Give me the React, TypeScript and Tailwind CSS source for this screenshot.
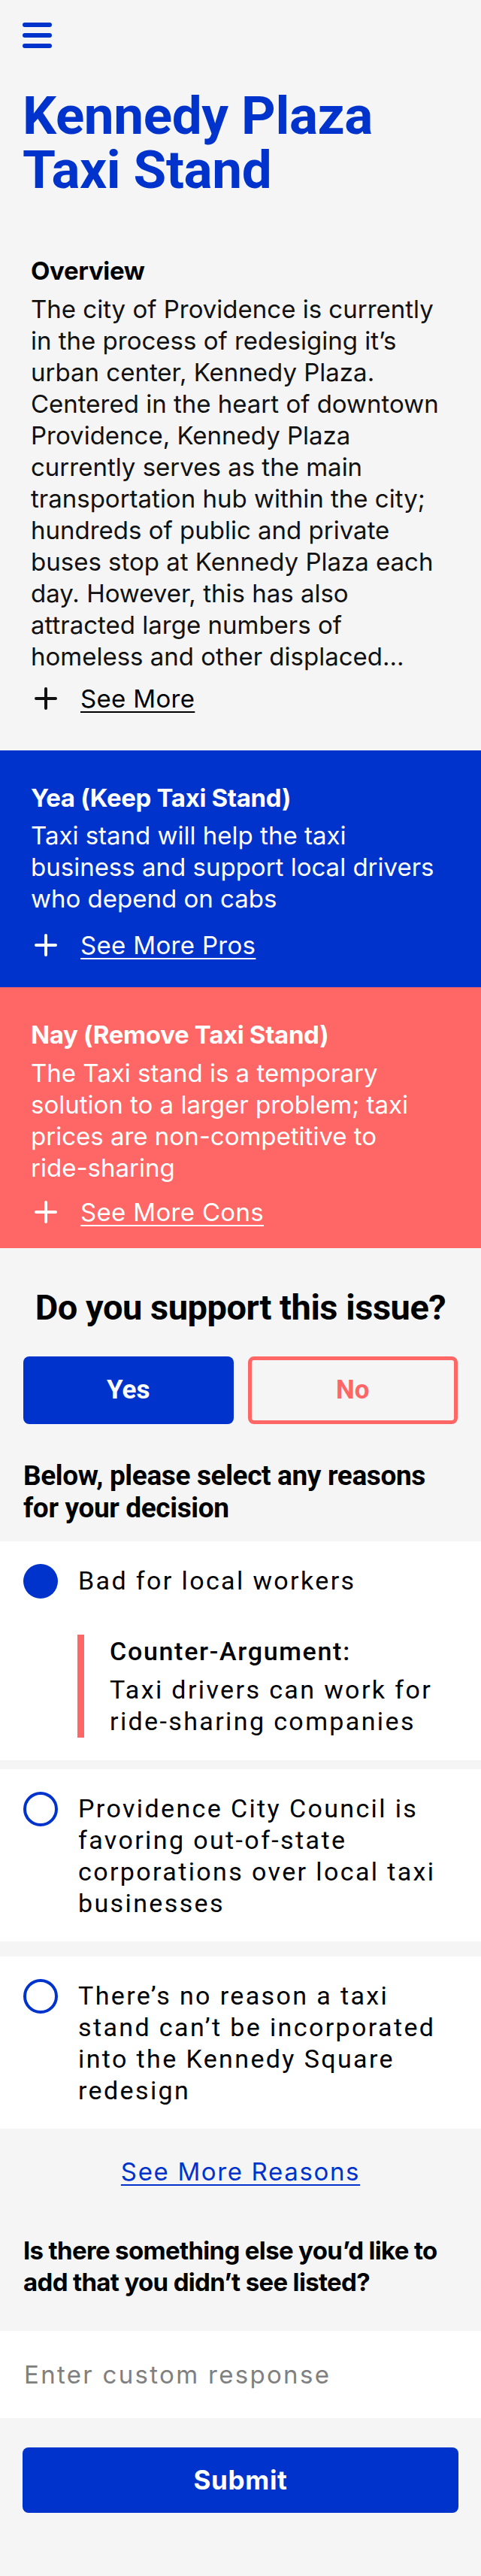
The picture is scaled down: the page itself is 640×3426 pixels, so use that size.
import React, { useState } from 'react';

const Plus: React.FC<{ color: string }> = ({ color }) => (
  <svg width="40" height="40" viewBox="0 0 40 40" fill="none" stroke={color} strokeWidth="4" strokeLinecap="round">
    <line x1="20" y1="7" x2="20" y2="33" />
    <line x1="7" y1="20" x2="33" y2="20" />
  </svg>
);

const SeeMore: React.FC<{ label: string; color: string; className?: string }> = ({ label, color, className }) => (
  <div className={`flex items-center gap-[26px] ${className ?? ''}`}>
    <Plus color={color} />
    <a href="#" className="underline decoration-2 underline-offset-[5px] tracking-[0.01em]">
      {label}
    </a>
  </div>
);

const Radio: React.FC<{ checked: boolean }> = ({ checked }) =>
  checked ? (
    <span className="block w-[46px] h-[46px] shrink-0 rounded-full bg-[#0033cc]" />
  ) : (
    <span className="block w-[46px] h-[46px] shrink-0 rounded-full border-4 border-[#0033cc] bg-white" />
  );

const reasons = [
  {
    label: 'Bad for local workers',
    counter: 'Taxi drivers can work for ride-sharing companies',
  },
  {
    label: 'Providence City Council is favoring out-of-state corporations over local taxi businesses',
  },
  {
    label: 'There’s no reason a taxi stand can’t be incorporated into the Kennedy Square redesign',
  },
];

const App: React.FC = () => {
  const [support, setSupport] = useState<'yes' | 'no'>('yes');
  const [picked, setPicked] = useState(0);

  return (
    <div className="w-[640px] min-h-screen bg-[#f5f5f5] text-black font-['Inter',sans-serif]">
      {/* Header */}
      <div className="px-[30px] pt-[30px]">
        <button className="flex flex-col gap-[8px]" aria-label="Menu">
          <span className="block w-[39px] h-[6px] rounded-full bg-[#0033cc]" />
          <span className="block w-[39px] h-[6px] rounded-full bg-[#0033cc]" />
          <span className="block w-[39px] h-[6px] rounded-full bg-[#0033cc]" />
        </button>
        <h1 className="mt-[54px] font-['Roboto',sans-serif] font-bold text-[71px] leading-[72px] tracking-[-0.005em] text-[#0033cc]">
          Kennedy Plaza
          <br />
          Taxi Stand
        </h1>
      </div>

      {/* Overview */}
      <section className="pl-[41px] pr-[30px] pt-[77px] pb-[48px] text-[33px] leading-[42px]">
        <h2 className="font-bold tracking-[-0.01em]">Overview</h2>
        <p className="mt-[9px] text-[#111]">
          The city of Providence is currently in the process of redesiging it’s urban center, Kennedy Plaza.
          Centered in the heart of downtown Providence, Kennedy Plaza currently serves as the main transportation
          hub within the city; hundreds of public and private buses stop at Kennedy Plaza each day. However, this
          has also attracted large numbers of homeless and other displaced...
        </p>
        <SeeMore label="See More" color="#111" className="mt-[14px]" />
      </section>

      {/* Pros */}
      <section className="bg-[#0033cc] text-white pl-[41px] pr-[44px] pt-[42px] pb-[35px] text-[33px] leading-[42px]">
        <h3 className="font-bold tracking-[-0.01em]">Yea (Keep Taxi Stand)</h3>
        <p className="mt-[8px]">Taxi stand will help the taxi business and support local drivers who depend on cabs</p>
        <SeeMore label="See More Pros" color="#fff" className="mt-[20px]" />
      </section>

      {/* Cons */}
      <section className="bg-[#ff6666] text-white pl-[41px] pr-[44px] pt-[42px] pb-[27px] text-[33px] leading-[42px]">
        <h3 className="font-bold tracking-[-0.01em]">Nay (Remove Taxi Stand)</h3>
        <p className="mt-[9px]">
          The Taxi stand is a temporary solution to a larger problem; taxi prices are non-competitive to{' '}
          <span className="whitespace-nowrap">ride-sharing</span>
        </p>
        <SeeMore label="See More Cons" color="#fff" className="mt-[17px]" />
      </section>

      {/* Vote */}
      <section className="px-[31px] pt-[54px] pb-[23px] font-['Roboto',sans-serif]">
        <h2 className="text-center font-bold text-[47px] leading-[50px] tracking-[-0.01em]">Do you support this issue?</h2>
        <div className="mt-[40px] grid grid-cols-2 gap-[19px]">
          <button
            onClick={() => setSupport('yes')}
            className={`h-[90px] rounded-[8px] text-[35px] font-bold ${
              support === 'yes' ? 'bg-[#0033cc] text-white' : 'border-[5px] border-[#0033cc] text-[#0033cc]'
            }`}
          >
            Yes
          </button>
          <button
            onClick={() => setSupport('no')}
            className={`h-[90px] rounded-[8px] text-[35px] font-bold ${
              support === 'no' ? 'bg-[#ff6666] text-white' : 'border-[5px] border-[#ff6666] text-[#ff6666]'
            }`}
          >
            No
          </button>
        </div>
        <p className="mt-[47px] font-bold text-[37px] leading-[43px] tracking-[-0.01em]">
          Below, please select any reasons for your decision
        </p>
      </section>

      {/* Reasons */}
      <div className="font-['Roboto',sans-serif] text-[34px] leading-[42px] tracking-[0.07em]">
        {reasons.map((r, i) => (
          <div
            key={i}
            className={`bg-white pl-[31px] pr-[36px] pt-[30px] pb-[30px] ${i === 1 ? 'mt-[12px]' : ''} ${
              i === 2 ? 'mt-[20px]' : ''
            }`}
          >
            <label className="flex items-start gap-[27px] cursor-pointer" onClick={() => setPicked(i)}>
              <Radio checked={picked === i} />
              <span className="pt-[1px]">{r.label}</span>
            </label>
            {r.counter && (
              <div className="mt-[48px] ml-[72px] border-l-[9px] border-[#ff6666] pl-[34px] py-[1px]">
                <p className="font-medium tracking-[0.05em]">Counter-Argument:</p>
                <p className="mt-[9px]">{r.counter}</p>
              </div>
            )}
          </div>
        ))}
      </div>

      {/* Custom response */}
      <section className="pt-[36px] pb-[81px]">
        <div className="text-center text-[33px] leading-[42px]">
          <a href="#" className="text-[#0033cc] underline decoration-2 underline-offset-[5px] tracking-[0.05em]">
            See More Reasons
          </a>
        </div>
        <p className="mt-[63px] pl-[31px] pr-[20px] font-bold text-[33px] leading-[42px] tracking-[-0.02em]">
          Is there something else you’d like to add that you didn’t see listed?
        </p>
        <input
          type="text"
          placeholder="Enter custom response"
          className="mt-[44px] block w-full h-[116px] bg-white px-[32px] text-[33px] tracking-[0.07em] outline-none placeholder:text-[#808080]"
        />
        <div className="px-[30px] mt-[39px]">
          <button className="w-full h-[87px] rounded-[8px] bg-[#0033cc] text-white text-[35px] font-bold tracking-[0.02em]">
            Submit
          </button>
        </div>
      </section>
    </div>
  );
};

export default App;
